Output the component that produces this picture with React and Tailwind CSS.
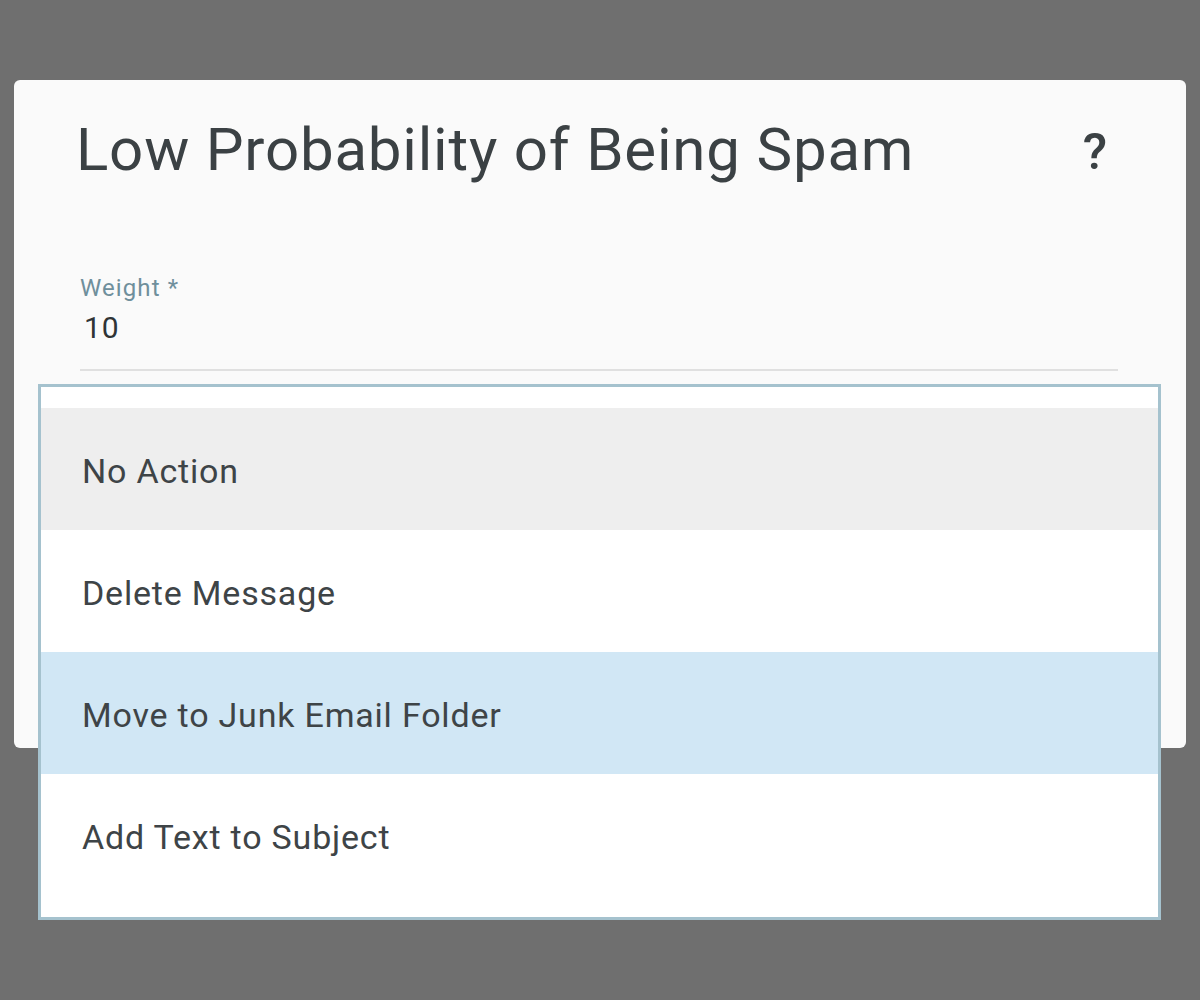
export default function App() {
  const items = [
    { label: "No Action", cls: "bg-[#eeeeee]" },
    { label: "Delete Message", cls: "bg-white" },
    { label: "Move to Junk Email Folder", cls: "bg-[#d1e7f5]" },
    { label: "Add Text to Subject", cls: "bg-white" },
  ];
  return (
    <div
      className="w-[1200px] h-[1000px] bg-[#6f6f6f] pt-[80px] px-[14px]"
      style={{ fontFamily: "Roboto, 'Noto Sans', Arial, sans-serif" }}
    >
      <div className="relative h-[668px] rounded-[6px] bg-[#fafafa]">
        <div className="flex items-start justify-between pl-[62px] pr-[79px] pt-[40px]">
          <h1 className="text-[60px] leading-[60px] font-normal text-[#3b4144] tracking-[0.8px]">
            Low Probability of Being Spam
          </h1>
          <span className="mt-[7px] text-[50px] leading-[50px] font-medium text-[#3b4144]">?</span>
        </div>
        <div className="mt-[97px] ml-[66px] mr-[68px]">
          <div className="text-[24px] leading-[22px] text-[#6f8f9c] tracking-[1.1px]">Weight *</div>
          <div className="mt-[15px] text-[30px] leading-[28px] text-[#2f3436] pl-[4px] tracking-[1px]">10</div>
          <div className="mt-[27px] h-[2px] bg-[#e0e0e0]"></div>
        </div>
        <div className="absolute left-[24px] top-[304px] w-[1123px] border-[3px] border-[#a5c2ce] bg-white py-[21px]">
          {items.map((it) => (
            <div
              key={it.label}
              className={`h-[122px] flex items-center pl-[41px] pt-[4px] text-[34px] tracking-[0.8px] text-[#3e4447] ${it.cls}`}
            >
              {it.label}
            </div>
          ))}
        </div>
      </div>
    </div>
  );
}
